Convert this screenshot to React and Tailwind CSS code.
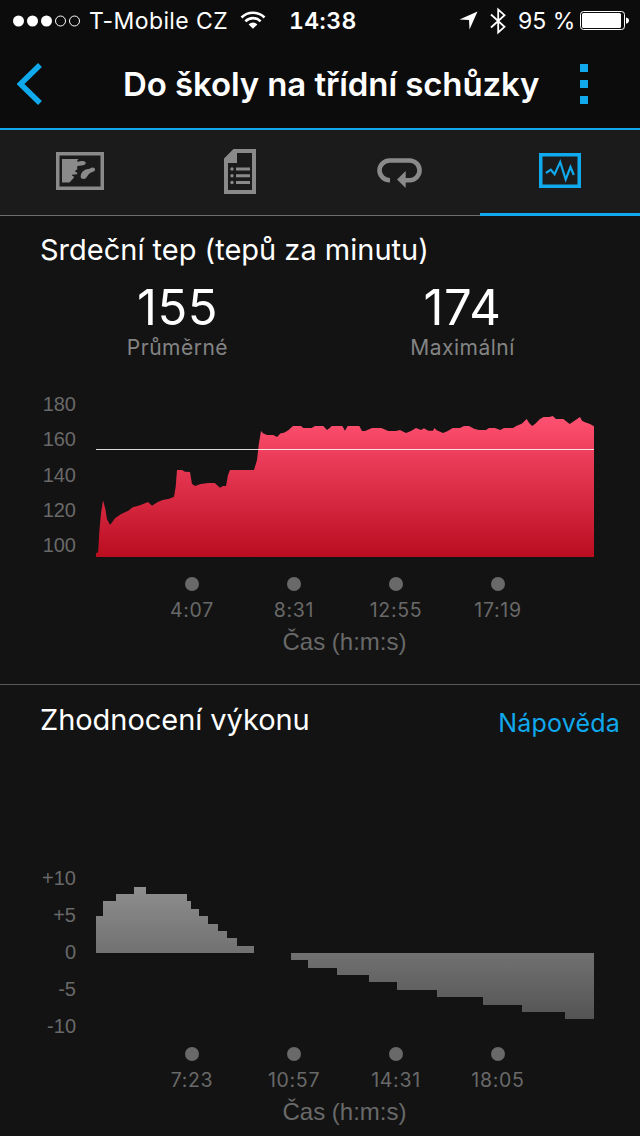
import { useState } from "react";
import clsx from "clsx";

const HEART_RATE =
  "0,177 0,173 1.7,172.7 2.3,170 3.3,151.7 5,133.3 7,120.3 9.3,128.7 11,139.3 13.7,144.3 14.7,144.3 19,138.3 24.7,134.3 32.3,130.7 36.7,127.3 44,125.3 52,122 56,125.7 61.7,122 66.7,120 73.3,118.7 78,116.7 79.7,106.7 81,90 86,90 89,91.7 94,92 96,104 99.3,106 104.7,104 112.3,103 118.7,103 124,107.7 127,106 130,106 132,95 134,90 158,90 161,80 162.7,65 165,51 167,53.3 171,55 177.3,55 181,57 184.7,53.3 188,52.7 192.3,50.3 197,46 205,46 207.3,48 215.7,48 219,46 227.3,46 231,50 234,47.7 235.7,46 246.3,46 249,50.7 251.7,46 263.3,46 266,51 269,51 276,48 285.3,48 292.3,51 300,51 304,50 310,53 315,51 320,48 325,50 328,48.3 332.3,50.7 337,50.7 338.3,48 340.7,50.3 347,53 351.3,51.3 356.7,48 364,48 368,46 373,46 378,48.7 383,50 390,50 393,48 399,48 404.3,50 408,48 417,48 420.7,45.7 425.7,43.7 430.7,39 433,42.7 436,46 439,44 444,39 447.7,37 453.3,37 456.7,36 460,39 467.3,39 473.7,44 484,37 486,40.7 489,42.3 494,44 498,46.3 498,177";

const stats = [
  { value: "155", label: "Průměrné" },
  { value: "174", label: "Maximální" },
];

function MapIcon() {
  return (
    <svg width="48" height="38" viewBox="0 0 48 38" fill="currentColor">
      <rect x="1.75" y="1.75" width="44.5" height="34.5" fill="none" stroke="currentColor" strokeWidth="3.5" />
      <path d="M6 7h16.500c-.5 1-2 1.500-1.300 2.300 1.300 1 3.300-.5 5.500-.3 2 .2 3.300 1 3 2.300-.3 1.700-2.500 2-4.200 2.200-2 .2-3.800.2-4.300 1.200-.4 1 .4 1.700 0 2.500-.4 1-2.200.8-2 2 .1 1 2.500 1.200 2.200 2.300-.4 1.300-3 .8-5.200 1.300-1 .4.200 1.200 1.200 1.500 1.200.5.500 1.700-.7 2.600-2 1.500-2 3.600-4 3.600H6z" />
      <path d="M25.500 26.500c-1.500-1.200-1-4.800 1.500-7.300 3-2.800 5-1.500 7.400-3 2-1.300 4.600-.6 4.600 1.200 0 2-2.400 2.200-4.700 3.500-3.300 1.700-3.300 6-6.300 6-1 0-2-.1-2.500-.4z" />
    </svg>
  );
}

function NotesIcon() {
  return (
    <svg width="32" height="45" viewBox="0 0 32 45" fill="currentColor">
      <path d="M9.500 0H32v45H0V9.500zM13 4v10H4v27h24V4z" fillRule="evenodd" />
      <path d="M12 18.500h14v3H12zM12 25.300h14v3H12zM12 32h14v3H12z" />
      <circle cx="8" cy="20" r="1.7" />
      <circle cx="8" cy="26.800" r="1.7" />
      <circle cx="8" cy="33.500" r="1.7" />
    </svg>
  );
}

function LapsIcon() {
  return (
    <svg className="mt-1" width="46" height="32" viewBox="0 0 46 32">
      <path d="M13 23.200A10.200 9.800 0 0 1 12.500 3.500h20a10 9.800 0 0 1 0 19.700H26" fill="none" stroke="currentColor" strokeWidth="4.600" />
      <path d="M20 22.500l8.700-8.500v17z" fill="currentColor" />
    </svg>
  );
}

function ChartIcon() {
  return (
    <svg width="42" height="35" viewBox="0 0 42 35" fill="none" stroke="currentColor">
      <rect x="1.750" y="1.750" width="38.500" height="31.500" strokeWidth="3.500" />
      <path d="M7 20l4.800-3.300 3.800 4.600L21.200 9l5.500 17.500L31.500 14l3.300 8" strokeWidth="2.200" />
    </svg>
  );
}

const tabs = [
  { name: "map", icon: <MapIcon /> },
  { name: "notes", icon: <NotesIcon /> },
  { name: "laps", icon: <LapsIcon /> },
  { name: "charts", icon: <ChartIcon /> },
];

function StatusBar() {
  return (
    <div className="flex h-[41px] items-center pl-[13px] pr-[11px] text-[23px] leading-[41px]">
      <svg width="68" height="12" viewBox="0 0 68 12" fill="white">
        <circle cx="5.500" cy="6" r="5.500" />
        <circle cx="19.500" cy="6" r="5.500" />
        <circle cx="33.500" cy="6" r="5.500" />
        <circle cx="47.500" cy="6" r="5" fill="none" stroke="white" />
        <circle cx="61.500" cy="6" r="5" fill="none" stroke="white" />
      </svg>
      <span className="ml-2 w-[151px] whitespace-nowrap pt-0.5 tracking-[0.4px]">T-Mobile CZ</span>
      <svg className="mb-0.5" width="26" height="18" viewBox="0 0 26 18" fill="none" stroke="white" strokeWidth="2.600">
        <path d="M1.500 6.500a16.300 16.300 0 0 1 23 0M5.400 10.300a10.700 10.700 0 0 1 15.200 0" />
        <path d="M13 17.800L8.600 13.400a6.200 6.200 0 0 1 8.800 0z" fill="white" stroke="none" />
      </svg>
      <span className="ml-[23px] w-[71px] whitespace-nowrap pt-0.5 font-semibold tabular-nums tracking-[0.4px]">
        14:38
      </span>
      <svg className="ml-auto" width="19" height="19" viewBox="0 0 19 19" fill="white">
        <path d="M18.500.5L10.500 18.500 10 9 .5 8.500z" />
      </svg>
      <svg className="ml-3" width="16" height="28" viewBox="0 0 16 28" fill="none" stroke="white" strokeWidth="1.800">
        <path d="M1 7.500l13.500 12.300L8.200 25.500V2.500l6.300 5.700L1 20.500" />
      </svg>
      <span className="ml-3 w-14 whitespace-nowrap pt-0.5">95 %</span>
      <svg className="ml-[6px]" width="49" height="20" viewBox="0 0 49 20">
        <rect x=".5" y=".5" width="44" height="18" rx="3" fill="none" stroke="white" />
        <rect x="2" y="2" width="39" height="15" rx="1.500" fill="white" />
        <path d="M46 6.500c2 .3 3 1.500 3 3s-1 2.800-3 3.200z" fill="white" />
      </svg>
    </div>
  );
}

function Header() {
  return (
    <header className="flex h-[89px] items-center border-b-2 border-[#11a9ed] pb-0.5">
      <button className="ml-[17px] text-[#11a9ed]">
        <svg width="26" height="42" viewBox="0 0 26 42" fill="none" stroke="currentColor" strokeWidth="5.500">
          <path d="M23 2L3.500 21 23 40" />
        </svg>
      </button>
      <h1 className="ml-20 w-[416px] whitespace-nowrap text-[33px] font-semibold leading-10 tracking-[-0.1px]">
        Do školy na třídní schůzky
      </h1>
      <button className="ml-[41px] flex flex-col gap-2">
        <span className="size-2 bg-[#11a9ed]" />
        <span className="size-2 bg-[#11a9ed]" />
        <span className="size-2 bg-[#11a9ed]" />
      </button>
    </header>
  );
}

function YAxis({ labels, className }) {
  return (
    <div className={clsx("w-[76px] text-right font-['Liberation_Sans',sans-serif] text-xl text-[#696969]", className)}>
      {labels.map((label) => (
        <div key={label}>{label}</div>
      ))}
    </div>
  );
}

function TimeAxis({ times }) {
  return (
    <div className="text-[#696969]">
      <div className="flex pl-[141px]">
        {times.map((time) => (
          <div key={time} className="flex w-[102px] flex-col items-center">
            <span className="size-3.5 rounded-full bg-[#696969]" />
            <span className="mt-[7px] text-[19.500px] leading-6 tracking-[0.7px]">{time}</span>
          </div>
        ))}
      </div>
      <div className="mt-1.5 pl-[49px] text-center font-['Liberation_Sans',sans-serif] text-2xl leading-7">
        Čas (h:m:s)
      </div>
    </div>
  );
}

export default function App() {
  const [activeTab, setActiveTab] = useState("charts");

  return (
    <div className="h-[1136px] w-[640px] overflow-hidden bg-[#131313] font-[Inter,sans-serif] text-white">
      <div className="bg-[#0c0c0c]">
        <StatusBar />
        <Header />
      </div>

      {/* Tabs */}
      <nav className="flex h-[86px] bg-[#1b1b1b]">
        {tabs.map((tab) => (
          <button
            key={tab.name}
            onClick={() => setActiveTab(tab.name)}
            className={clsx(
              "flex w-40 items-center justify-center",
              activeTab === tab.name
                ? "border-b-3 border-[#11a9ed] pb-0.5 text-[#11a9ed]"
                : "border-b border-[#6f6f6f] pb-[3px] text-[#8a8a8a]"
            )}
          >
            {tab.icon}
          </button>
        ))}
      </nav>

      {/* Heart rate */}
      <section className="h-[469px] border-b border-[#565656] pt-3.5">
        <h2 className="pl-10 text-[29px] leading-10">Srdeční tep (tepů za minutu)</h2>
        <div className="flex px-[35px] pt-2.5">
          {stats.map((stat) => (
            <div key={stat.label} className="w-[285px] text-center">
              <div className="text-[49px] leading-[56px] tracking-[0.5px]">{stat.value}</div>
              <div className="text-[21px] leading-6 tracking-[0.5px] text-[#848484]">{stat.label}</div>
            </div>
          ))}
        </div>
        <div className="flex h-[197px] pt-5">
          <YAxis labels={["180", "160", "140", "120", "100"]} className="pt-[7px] leading-[35.300px]" />
          <svg className="ml-5" width="498" height="177" viewBox="0 0 498 177">
            <defs>
              <linearGradient id="heart" gradientUnits="userSpaceOnUse" x1="0" y1="36" x2="0" y2="177">
                <stop offset="0" stopColor="#ff5171" />
                <stop offset="1" stopColor="#bb0d20" />
              </linearGradient>
            </defs>
            <polygon points={HEART_RATE} fill="url(#heart)" />
            <rect y="69" width="498" height="1" fill="white" fillOpacity=".85" />
          </svg>
        </div>
        <div className="pt-5">
          <TimeAxis times={["4:07", "8:31", "12:55", "17:19"]} />
        </div>
      </section>

      {/* Performance condition */}
      <section className="pt-[15px]">
        <div className="flex h-10 items-center justify-between pl-10 pr-5">
          <h2 className="text-[29px] leading-10 tracking-[-0.05px]">Zhodnocení výkonu</h2>
          <button className="pt-1.5 text-[25px] leading-8 tracking-[0.2px] text-[#11a9ed]">Nápověda</button>
        </div>
        <div className="flex pt-[120px]">
          <YAxis labels={["+10", "+5", "0", "-5", "-10"]} className="leading-[37px]" />
          <svg className="ml-5 mt-[27px]" width="498" height="132" viewBox="0 0 498 132">
            <defs>
              <linearGradient id="condition" gradientUnits="userSpaceOnUse" x1="0" y1="0" x2="0" y2="132">
                <stop offset="0" stopColor="#8e8e8e" />
                <stop offset="1" stopColor="#545454" />
              </linearGradient>
            </defs>
            <g fill="url(#condition)">
              <path d="M0 66V29H7V14H20V7H38V0H50V7H91V14H95V22H103V29H112V37H122V44H131V51H141V59H158V66Z" />
              <path d="M195 66V73H212V81H241V88H273V95H301V103H341V110H387V118H426V125H469V132H498V66Z" />
            </g>
          </svg>
        </div>
        <div className="pt-0.5">
          <TimeAxis times={["7:23", "10:57", "14:31", "18:05"]} />
        </div>
      </section>
    </div>
  );
}
